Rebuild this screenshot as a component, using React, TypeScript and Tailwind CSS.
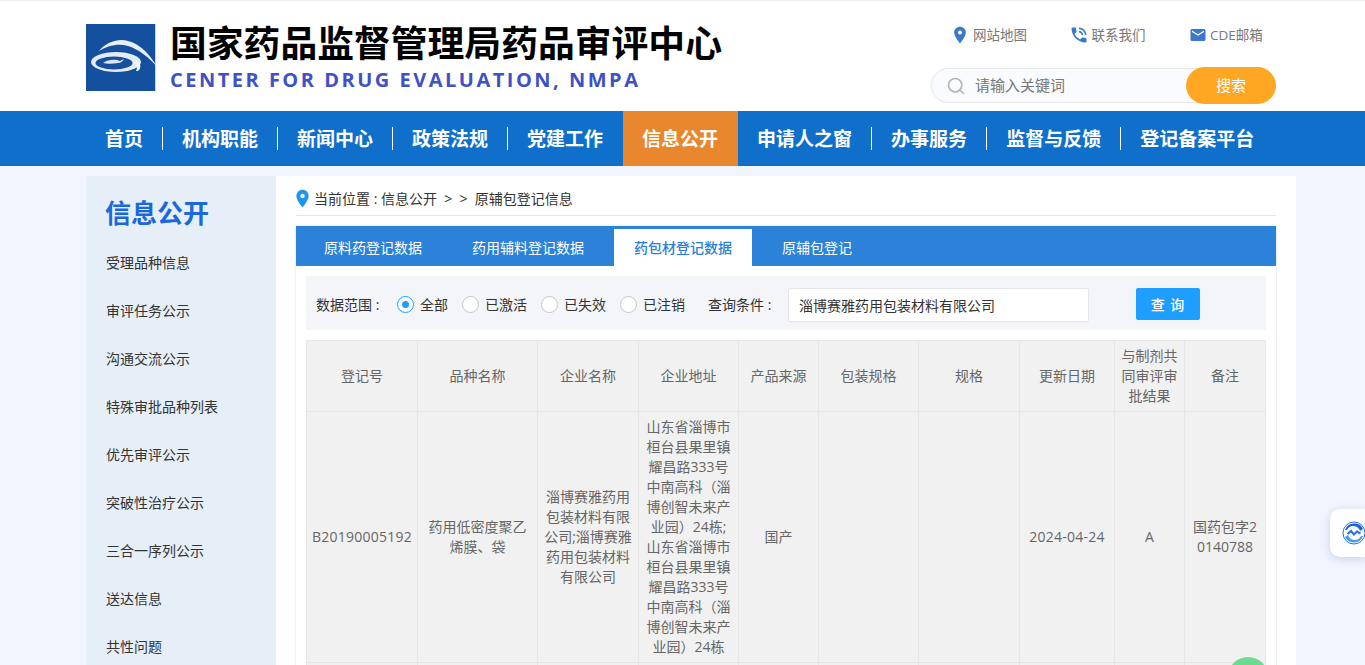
import React from 'react';
import { Search } from 'lucide-react';
import { MdEmail, MdLocationOn, MdPhoneInTalk } from 'react-icons/md';

const navItems = ['首页', '机构职能', '新闻中心', '政策法规', '党建工作', '信息公开', '申请人之窗', '办事服务', '监督与反馈', '登记备案平台'];
const sideItems = ['受理品种信息', '审评任务公示', '沟通交流公示', '特殊审批品种列表', '优先审评公示', '突破性治疗公示', '三合一序列公示', '送达信息', '共性问题'];
const tabs = ['原料药登记数据', '药用辅料登记数据', '药包材登记数据', '原辅包登记'];
const radios = ['全部', '已激活', '已失效', '已注销'];
const columns = [
  { label: '登记号', width: 'w-[111px]' },
  { label: '品种名称', width: 'w-[120px]' },
  { label: '企业名称', width: 'w-[101px]' },
  { label: '企业地址', width: 'w-[100px]' },
  { label: '产品来源', width: 'w-[80px]' },
  { label: '包装规格', width: 'w-[100px]' },
  { label: '规格', width: 'w-[101px]' },
  { label: '更新日期', width: 'w-[95px]' },
  { label: '与制剂共同审评审批结果', width: 'w-[70px]' },
  { label: '备注', width: 'w-[81px]' },
];
const row = [
  'B20190005192',
  '药用低密度聚乙烯膜、袋',
  '淄博赛雅药用包装材料有限公司;淄博赛雅药用包装材料有限公司',
  '山东省淄博市桓台县果里镇耀昌路333号中南高科（淄博创智未来产业园）24栋;山东省淄博市桓台县果里镇耀昌路333号中南高科（淄博创智未来产业园）24栋',
  '国产',
  '',
  '',
  '2024-04-24',
  'A',
  '国药包字20140788',
];

const Logo = () => (
  <svg viewBox="0 0 72 67" className="h-[67px] w-[72px] shrink-0">
    <rect width="69" height="67" fill="#15509f" />
    <rect x="69" width="1" height="67" fill="#c5d5ea" />
    <path d="M13 27C20 18 33 14 42 17C55 20 65 32 71 43C63 33 52 25 42 22C32 19 21 22 13 27Z" fill="#e8eef6" />
    <ellipse cx="30" cy="38" rx="25" ry="10" fill="#e4ebf4" />
    <ellipse cx="28" cy="39" rx="18.500" ry="6.500" fill="#15509f" />
    <path d="M17 39C22 35 30 35 34 37L38 35C37 37 35 39 32 39C27 40 21 40 17 39Z" fill="#dbe5f1" />
    <path d="M50 36C56 40 55 45 52 47L50 47C52 43 51 41 47 39Z" fill="#f0f4f9" />
  </svg>
);

const App: React.FC = () => {
  return (
    <div className="h-[665px] overflow-hidden bg-[#f1f6fe] font-['Open_Sans','Noto_Sans_CJK_SC',sans-serif] relative">
      <header className="h-[111px] bg-white border-t border-[#ececec]">
        <div className="w-[1190px] ml-[86px] flex justify-between">
          <div className="flex items-start gap-[12px] pt-[23px]">
            <Logo />
            <div>
              <h1 className="text-[36.800px] leading-[40px] font-bold text-black -mt-[1px]">国家药品监督管理局药品审评中心</h1>
              <p className="text-[20px] leading-[28px] mt-[3px] font-bold tracking-[2.500px] text-[#3f51c5]">CENTER FOR DRUG EVALUATION, NMPA</p>
            </div>
          </div>
          <div className="w-[345px] pt-[24px]">
            <div className="flex text-[13.500px] leading-[20px] text-[#777]">
              <a className="ml-[19px] flex w-[118.500px] items-center gap-[3px]"><MdLocationOn size={20} className="text-[#3a78c9]" />网站地图</a>
              <a className="flex w-[120px] items-center gap-[3px]"><MdPhoneInTalk size={20} className="text-[#3a78c9]" />联系我们</a>
              <a className="flex items-center gap-[3.500px]"><MdEmail size={18} className="text-[#3a78c9]" />CDE邮箱</a>
            </div>
            <div className="mt-[22px] flex h-[37px] items-center">
              <div className="flex h-[35px] w-[300px] items-center rounded-l-[18px] border border-[#e4e6ea] bg-[#f9fbfe] pl-[14px]">
                <Search size={20} strokeWidth={2} className="text-[#b5b5b5]" />
                <span className="ml-[9px] text-[15px] text-[#777]">请输入关键词</span>
              </div>
              <button className="-ml-[45px] h-[37px] w-[90px] rounded-full bg-[#ffa722] text-[15px] text-white">搜索</button>
            </div>
          </div>
        </div>
      </header>

      <nav className="h-[55px] bg-[#0f6fcb]">
        <ul className="ml-[86px] flex h-full items-center">
          {navItems.map((item, idx) => (
            <li key={item} className={`relative flex h-full items-center pl-[19px] pr-[20px] pt-[2px] text-[19px] font-bold text-white ${item === '信息公开' ? 'bg-[#e8872d]' : ''}`}>
              {item}
              {idx < navItems.length - 1 && item !== '党建工作' && item !== '信息公开' && (
                <span className="absolute right-0 top-[16px] h-[23px] w-px bg-white"></span>
              )}
            </li>
          ))}
        </ul>
      </nav>

      <div className="ml-[86px] mt-[10px] flex w-[1210px]">
        <aside className="w-[190px] shrink-0 bg-[#e6eef8] pt-[18px] pl-[20px]">
          <h2 className="-ml-[1px] text-[26px] leading-[38px] font-bold text-[#1a68dc]">信息公开</h2>
          <ul className="mt-[7px]">
            {sideItems.map(item => (
              <li key={item} className="h-[48px] text-[14px] leading-[48px] text-[#333]">{item}</li>
            ))}
          </ul>
        </aside>

        <main className="flex-1 bg-white px-[20px] pb-[40px]">
          <div className="flex h-[40px] items-center gap-[1px] border-b border-[#e5e5e5] pt-[5px] text-[14px] text-[#333]">
            <MdLocationOn size={21} className="-ml-[4px] text-[#1e96f0]" />
            <span>当前位置 : 信息公开 &nbsp;&gt;&nbsp; &gt;&nbsp; 原辅包登记信息</span>
          </div>

          <div className="mt-[10px] shadow-[0_0_2px_rgba(80,120,190,0.350)]">
            <div className="flex h-[40px] items-end gap-[10px] bg-[#2b82d8] pl-[8px]">
              {tabs.map((tab, idx) => (
                <div key={tab} className={`flex h-[37px] items-center px-[20px] text-[14px] ${idx === 2 ? 'bg-white font-medium text-[#2b7fd6]' : 'text-white'}`}>{tab}</div>
              ))}
            </div>
            <div className="px-[10px] pt-[10px]">
              <div className="flex h-[54px] items-center bg-[#f3f5f9] pl-[10px] pt-[2px] text-[14px] text-[#333]">
                <span className="w-[81px]">数据范围 :</span>
                {radios.map((radio, idx) => (
                  <label key={radio} className="mr-[14px] flex items-center gap-[6px]">
                    <span className={`flex h-[17px] w-[17px] items-center justify-center rounded-full border bg-white ${idx === 0 ? 'border-[#1e9fff]' : 'border-[#c6c6c6]'}`}>
                      {idx === 0 && <span className="h-[7px] w-[7px] rounded-full bg-[#1e9fff]"></span>}
                    </span>
                    {radio}
                  </label>
                ))}
                <span className="ml-[9px] w-[80px]">查询条件 :</span>
                <div className="mt-[2px] flex h-[34px] w-[301px] items-center rounded-[2px] border border-[#e6e6e6] bg-white pl-[10px]">淄博赛雅药用包装材料有限公司</div>
                <button className="ml-[47px] h-[32px] w-[64px] rounded-[2px] bg-[#1e9fff] text-[14px] font-medium tracking-[1px] text-white">查 询</button>
              </div>
              <table className="mt-[10px] w-[960px] table-fixed border-collapse bg-[#f1f1f1] text-center text-[14px] leading-[20px] text-[#666]">
                <thead>
                  <tr className="h-[71px]">
                    {columns.map(col => (
                      <th key={col.label} className={`${col.width} border border-[#e6e6e6] px-[5px] font-normal`}>{col.label}</th>
                    ))}
                  </tr>
                </thead>
                <tbody>
                  <tr className="h-[251px]">
                    {row.map((cell, idx) => (
                      <td key={idx} className={`${idx === 0 ? 'px-0 tracking-[0.250px]' : 'px-[5px]'} ${idx === 7 ? 'tracking-[0.250px]' : ''} break-all border border-[#e6e6e6] py-[5px]`}>{cell}</td>
                    ))}
                  </tr>
                  <tr className="h-[60px]">
                    {row.map((_, idx) => (
                      <td key={idx} className="border border-[#e6e6e6]"></td>
                    ))}
                  </tr>
                </tbody>
              </table>
            </div>
          </div>
        </main>
      </div>

      <div className="absolute right-0 top-[509px] flex h-[48px] w-[35px] items-center overflow-hidden rounded-l-[10px] bg-white pl-[12px] shadow-[0_2px_10px_rgba(70,100,160,0.250)]">
        <svg viewBox="0 0 24 24" className="h-[24px] w-[24px] shrink-0">
          <circle cx="12" cy="12" r="11" fill="none" stroke="#2a72e5" strokeWidth="1" />
          <path d="M3 9A9.800 9.800 0 0 1 21 8L18 10A7 7 0 0 0 5 9Z" fill="#1a63d8" />
          <path d="M21 15A9.800 9.800 0 0 1 3 16L6 14A7 7 0 0 0 19 15Z" fill="#4a9bf0" />
          <path d="M5.500 13L9 10L12 13.500L15 10.500L18.500 12.500" fill="none" stroke="#2a72e5" strokeWidth="2.200" />
        </svg>
      </div>

      <div className="absolute left-[1228px] top-[657px] h-[40px] w-[40px] rounded-full bg-[#6bdc8f]"></div>
    </div>
  );
};

export default App;
